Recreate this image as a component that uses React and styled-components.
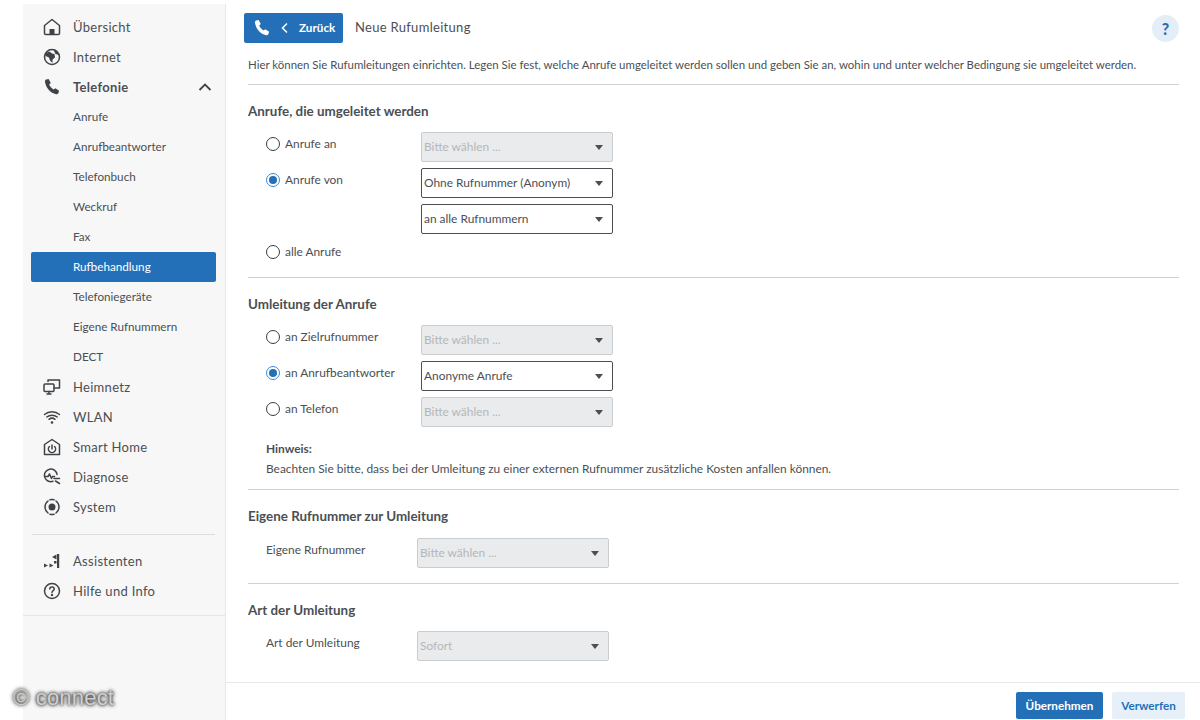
import React from "react";
import styled, { createGlobalStyle } from "styled-components";

const GlobalStyle = createGlobalStyle`
  *, *::before, *::after {
    box-sizing: border-box;
  }
  html, body {
    margin: 0;
    height: 100%;
    background: #fff;
    font-family: Lato, "Noto Sans", sans-serif;
    color: #4b4f54;
  }
`;

const Page = styled.div`
  position: relative;
  display: flex;
  width: 1200px;
  height: 720px;
  overflow: hidden;
  padding-left: 23px;
`;

const Sidebar = styled.aside`
  width: 203px;
  margin-top: 4px;
  background: #f7f7f7;
  border-right: 1px solid #e8e8e8;
  flex-shrink: 0;
`;

const NavBox = styled.nav`
  padding: 8px 8px 9px;
  border-bottom: 1px solid #e6e6e6;
`;

const NavDivider = styled.div`
  height: 1px;
  background: #dcdcdc;
  margin: 12px 2px 11px 1px;
`;

const NavItem = styled.a`
  display: flex;
  align-items: center;
  height: 30px;
  padding-left: 12px;
  font-size: 13px;
  font-weight: ${(p) => (p.$open ? 700 : 400)};
  color: #4b4f54;
  letter-spacing: 0.3px;
`;

const NavIcon = styled.span`
  display: flex;
  width: 18px;
  height: 18px;
  margin-right: 12px;
  color: #3f4347;
`;

const Chevron = styled.svg`
  margin-left: auto;
  margin-right: 5px;
`;

const SubItem = styled.a`
  display: flex;
  align-items: center;
  height: 30px;
  width: 185px;
  padding: 0 0 2px 42px;
  font-size: 11.700px;
  border-radius: 2px;
  color: ${(p) => (p.$active ? "#fff" : "#4b4f54")};
  background: ${(p) => (p.$active ? "#2470b8" : "transparent")};
`;

const Main = styled.main`
  flex: 1;
  display: flex;
  flex-direction: column;
  min-width: 0;
`;

const Content = styled.div`
  flex: 1;
  padding: 13px 21px 0 22px;
`;

const TopBar = styled.div`
  display: flex;
  align-items: center;
  height: 30px;
  margin-left: -4px;
`;

const BackButton = styled.button`
  display: flex;
  align-items: center;
  width: 99px;
  height: 30px;
  padding: 0 0 0 9px;
  border: 0;
  border-radius: 2px;
  background: #2470b8;
  color: #fff;
  font: 700 11.700px Lato, sans-serif;
`;

const BackText = styled.span`
  margin: 0 0 2px 7px;
`;

const PageTitle = styled.h1`
  margin: 0 0 2px 12px;
  font-size: 13px;
  font-weight: 400;
  letter-spacing: 0.3px;
`;

const HelpButton = styled.span`
  display: flex;
  align-items: center;
  justify-content: center;
  width: 27px;
  height: 27px;
  margin-left: auto;
  border-radius: 50%;
  background: #e4eef7;
  color: #2470b8;
  font-size: 16px;
  font-weight: 900;
`;

const Intro = styled.p`
  margin: 11px 0 0;
  height: 31px;
  padding: 1px 0 10px;
  line-height: 20px;
  font-size: 11.450px;
  white-space: nowrap;
  border-bottom: 1px solid #cfd2d4;
`;

const Section = styled.section`
  padding: 16px 0 ${(p) => p.$pad || 7}px;
  border-bottom: ${(p) => (p.$last ? "0" : "1px solid #cfd2d4")};
`;

const Heading = styled.h2`
  margin: 0 0 ${(p) => p.$gap || 11}px;
  height: 20px;
  line-height: 20px;
  font-size: 13.400px;
  font-weight: 700;
`;

const Row = styled.div`
  display: flex;
  align-items: flex-start;
  min-height: 30px;
  margin-bottom: 6px;
  padding-left: 18px;
  &:last-child {
    margin-bottom: 0;
  }
`;

const RadioLabel = styled.label`
  display: flex;
  align-items: center;
  width: 155px;
  height: 24px;
  padding-bottom: 2px;
  font-size: 11.900px;
  flex-shrink: 0;
`;

const Radio = styled.span`
  position: relative;
  width: 14px;
  height: 14px;
  margin: 2px 5px 0 0;
  border-radius: 50%;
  border: 1.500px solid ${(p) => (p.$checked ? "#3c8ad6" : "#3a3d40")};
  background: #fff;
  &::after {
    content: "";
    display: ${(p) => (p.$checked ? "block" : "none")};
    position: absolute;
    inset: 2px;
    border-radius: 50%;
    background: #2470b8;
  }
`;

const FieldLabel = styled.span`
  display: flex;
  align-items: center;
  width: ${(p) => p.$width || 151}px;
  height: 24px;
  padding-bottom: 2px;
  font-size: 11.900px;
  flex-shrink: 0;
`;

const Select = styled.div`
  display: flex;
  align-items: center;
  justify-content: space-between;
  width: 192px;
  height: 30px;
  padding: 0 9px 0 2px;
  border-radius: 2px;
  font-size: 11.900px;
  line-height: 26px;
  border: 1px solid ${(p) => (p.$disabled ? "#c9cdcf" : "#4b4f54")};
  background: ${(p) => (p.$disabled ? "#e9ebec" : "#fff")};
  color: ${(p) => (p.$disabled ? "#b4b7b9" : "#4b4f54")};
  &::after {
    content: "";
    border-left: 4.500px solid transparent;
    border-right: 4.500px solid transparent;
    border-top: 5px solid #4b4f54;
  }
`;

const SelectText = styled.span`
  margin-bottom: 1px;
`;

const Note = styled.div`
  margin: 12px 0 0 18px;
  font-size: 11.900px;
  line-height: 20px;
`;

const NoteTitle = styled.div`
  font-weight: 700;
`;

const Footer = styled.footer`
  display: flex;
  justify-content: flex-end;
  gap: 9px;
  height: 38px;
  padding: 9px 15px 0 0;
  border-top: 1px solid #e8e8e8;
`;

const FooterButton = styled.button`
  height: 27px;
  padding: 0 0 2px;
  width: ${(p) => (p.$primary ? "87px" : "73px")};
  border: 0;
  border-radius: 2px;
  background: ${(p) => (p.$primary ? "#2470b8" : "#e7f0f8")};
  color: ${(p) => (p.$primary ? "#fff" : "#2470b8")};
  font: 700 11.700px Lato, sans-serif;
`;

const Watermark = styled.div`
  position: absolute;
  left: 13px;
  top: 685px;
  font: 22px "Liberation Sans", sans-serif;
  letter-spacing: 0.2px;
  color: #cfcfcf;
  text-shadow: 0 0 4px #222, 0 0 3px #333;
`;

const BackChevron = styled.svg`
  margin-left: 7px;
`;

const Stroke = ({ children, size = 18 }) => (
  <svg width={size} height={size} viewBox="0 0 18 18" fill="none" stroke="currentColor" strokeWidth="1.500" strokeLinejoin="round" strokeLinecap="round">
    {children}
  </svg>
);

const PhoneIcon = ({ size = 18 }) => (
  <svg width={size} height={size} viewBox="0 0 18 18" fill="currentColor">
    <path d="M3.200 1.600 5.600 1l2.200 4-1.600 1.600c.7 1.900 2.400 3.900 4.500 5l1.700-1.400 3.700 2.500-.7 2.400c-.3.9-1.200 1.400-2.200 1.100C7.400 15.100 3.200 10.300 2 4c-.2-1 .3-2.100 1.200-2.400Z" />
  </svg>
);

const HomeIcon = () => (
  <Stroke>
    <path d="M1.500 7.500 9 1.500l7.500 6v7.700a1.300 1.300 0 0 1-1.300 1.300H2.800a1.300 1.300 0 0 1-1.300-1.300Z" />
    <rect x="6.500" y="11" width="5" height="5.500" fill="currentColor" stroke="none" />
  </Stroke>
);

const GlobeIcon = () => (
  <Stroke>
    <circle cx="9" cy="9" r="7.500" />
    <path d="M2.500 5 6.500 3.500l2.500 2 2.500.5.500 3.500-2.500 2v3.500L7 12.500 6 9.500 2.500 8ZM10.500 2l3.500 1 2 4-3.500-1Z" fill="currentColor" stroke="none" />
  </Stroke>
);

const NetIcon = () => (
  <Stroke>
    <rect x="1" y="6" width="10" height="7.500" rx="1" />
    <path d="M5 3.500V2h11.500v8H11M4 16h4M6 13.500V16" />
  </Stroke>
);

const WifiIcon = () => (
  <Stroke>
    <path d="M1.500 6.500c4.300-3.600 10.700-3.600 15 0M3.800 9c3-2.500 7.400-2.500 10.400 0M6 11.300c1.800-1.400 4.200-1.400 6 0" />
    <circle cx="9" cy="14.500" r="1.300" fill="currentColor" stroke="none" />
  </Stroke>
);

const SmartIcon = () => (
  <Stroke>
    <path d="M1.500 6.500 9 1.500l7.500 5v10h-15Z" />
    <path d="M6.400 8.500a3.600 3.600 0 1 0 5.200 0M9 7v4" />
  </Stroke>
);

const DiagnoseIcon = () => (
  <Stroke>
    <path d="M14 6.500A6.300 6.300 0 1 0 10 13.200" />
    <path d="M2.500 8.500H5l1.500-2.500 2 4.500 1-2h2M11 10.500h5.500M12.500 13l4 2.500" />
  </Stroke>
);

const SystemIcon = () => (
  <Stroke>
    <path d="M5 3a7.500 7.500 0 0 0 0 12M13 3a7.500 7.500 0 0 1 0 12M7 1.800a7.500 7.500 0 0 1 4 0M7 16.200a7.500 7.500 0 0 0 4 0" />
    <circle cx="9" cy="9" r="3.500" fill="currentColor" stroke="none" />
  </Stroke>
);

const WizardIcon = () => (
  <svg width="18" height="18" viewBox="0 0 18 18" fill="currentColor">
    <rect x="14" y="2" width="2.200" height="14" />
    <path d="M13.500 2.500v5L9 5zM1 11.500l4 2-4 2zM6.500 11.500l4 2-4 2z" />
    <rect x="11" y="9" width="2.500" height="2.500" />
  </svg>
);

const HelpIcon = () => (
  <Stroke>
    <circle cx="9" cy="9" r="7.500" />
    <path d="M6.800 7c0-1.300 1-2.100 2.200-2.100s2.200.8 2.200 2c0 1.700-2.200 1.700-2.200 3.500" />
    <circle cx="9" cy="13" r=".5" />
  </Stroke>
);

const mainNav = [
  ["Heimnetz", NetIcon],
  ["WLAN", WifiIcon],
  ["Smart Home", SmartIcon],
  ["Diagnose", DiagnoseIcon],
  ["System", SystemIcon],
];

const subNav = ["Anrufe", "Anrufbeantworter", "Telefonbuch", "Weckruf", "Fax", "Rufbehandlung", "Telefoniegeräte", "Eigene Rufnummern", "DECT"];

function Entry({ icon: Icon, children, open }) {
  return (
    <NavItem $open={open}>
      <NavIcon><Icon /></NavIcon>
      {children}
      {open && (
        <Chevron width="14" height="14" viewBox="0 0 14 14" fill="none" stroke="#3f4347" strokeWidth="1.800">
          <path d="M1.500 10 7 4.500 12.500 10" />
        </Chevron>
      )}
    </NavItem>
  );
}

function Dropdown({ disabled, children }) {
  return (
    <Select $disabled={disabled}>
      <SelectText>{children}</SelectText>
    </Select>
  );
}

function RadioRow({ label, checked, children }) {
  return (
    <Row>
      <RadioLabel><Radio $checked={checked} />{label}</RadioLabel>
      {children}
    </Row>
  );
}

export default function App() {
  return (
    <Page>
      <GlobalStyle />
      <Sidebar>
        <NavBox>
          <Entry icon={HomeIcon}>Übersicht</Entry>
          <Entry icon={GlobeIcon}>Internet</Entry>
          <Entry icon={PhoneIcon} open>Telefonie</Entry>
          {subNav.map((s) => (
            <SubItem key={s} $active={s === "Rufbehandlung"}>{s}</SubItem>
          ))}
          {mainNav.map(([label, icon]) => (
            <Entry key={label} icon={icon}>{label}</Entry>
          ))}
          <NavDivider />
          <Entry icon={WizardIcon}>Assistenten</Entry>
          <Entry icon={HelpIcon}>Hilfe und Info</Entry>
        </NavBox>
      </Sidebar>
      <Main>
        <Content>
          <TopBar>
            <BackButton>
              <PhoneIcon />
              <BackChevron width="14" height="14" viewBox="0 0 14 14" fill="none" stroke="#fff" strokeWidth="1.500">
                <path d="M9 2.500 4.500 7 9 11.500" />
              </BackChevron>
              <BackText>Zurück</BackText>
            </BackButton>
            <PageTitle>Neue Rufumleitung</PageTitle>
            <HelpButton>?</HelpButton>
          </TopBar>
          <Intro>Hier können Sie Rufumleitungen einrichten. Legen Sie fest, welche Anrufe umgeleitet werden sollen und geben Sie an, wohin und unter welcher Bedingung sie umgeleitet werden.</Intro>
          <Section>
            <Heading>Anrufe, die umgeleitet werden</Heading>
            <RadioRow label="Anrufe an"><Dropdown disabled>Bitte wählen ...</Dropdown></RadioRow>
            <RadioRow label="Anrufe von" checked><Dropdown>Ohne Rufnummer (Anonym)</Dropdown></RadioRow>
            <Row><FieldLabel $width={155} /><Dropdown>an alle Rufnummern</Dropdown></Row>
            <RadioRow label="alle Anrufe" />
          </Section>
          <Section $pad={10}>
            <Heading>Umleitung der Anrufe</Heading>
            <RadioRow label="an Zielrufnummer"><Dropdown disabled>Bitte wählen ...</Dropdown></RadioRow>
            <RadioRow label="an Anrufbeantworter" checked><Dropdown>Anonyme Anrufe</Dropdown></RadioRow>
            <RadioRow label="an Telefon"><Dropdown disabled>Bitte wählen ...</Dropdown></RadioRow>
            <Note>
              <NoteTitle>Hinweis:</NoteTitle>
              Beachten Sie bitte, dass bei der Umleitung zu einer externen Rufnummer zusätzliche Kosten anfallen können.
            </Note>
          </Section>
          <Section $pad={15}>
            <Heading $gap={12}>Eigene Rufnummer zur Umleitung</Heading>
            <Row><FieldLabel>Eigene Rufnummer</FieldLabel><Dropdown disabled>Bitte wählen ...</Dropdown></Row>
          </Section>
          <Section $last $pad={1}>
            <Heading>Art der Umleitung</Heading>
            <Row><FieldLabel>Art der Umleitung</FieldLabel><Dropdown disabled>Sofort</Dropdown></Row>
          </Section>
        </Content>
        <Footer>
          <FooterButton $primary>Übernehmen</FooterButton>
          <FooterButton>Verwerfen</FooterButton>
        </Footer>
      </Main>
      <Watermark>© connect</Watermark>
    </Page>
  );
}
